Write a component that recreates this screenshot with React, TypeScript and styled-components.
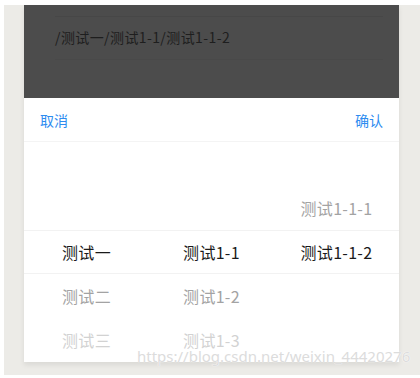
import styled, { createGlobalStyle } from "styled-components";

const GlobalStyle = createGlobalStyle`
  html, body {
    margin: 0;
    padding: 0;
    background: #ffffff;
  }
  body {
    font-family: "Microsoft YaHei", "Noto Sans CJK SC", "Liberation Sans", sans-serif;
  }
`;

const Page = styled.div`
  width: 420px;
  height: 378px;
  padding: 5px 0 0 4px;
  box-sizing: border-box;
  position: relative;
  overflow: hidden;
`;

const Frame = styled.div`
  background: #ecebe7;
  height: 370px;
  padding: 0 0 0 20px;
  box-sizing: border-box;
`;

const Panel = styled.div`
  width: 375px;
  display: flex;
  flex-direction: column;
  box-shadow: 0 3px 5px rgba(0, 0, 0, 0.08);
`;

const Mask = styled.div`
  height: 93px;
  background: #4c4c4c;
  padding: 11px 16px 0 31px;
  box-sizing: border-box;
`;

const PathBox = styled.div`
  height: 44px;
  padding-bottom: 3px;
  border-top: 1px solid #474747;
  border-bottom: 1px solid #494949;
  display: flex;
  align-items: center;
  font-size: 14px;
  letter-spacing: 0.4px;
  color: #1e1e1e;
  box-sizing: border-box;
`;

const Sheet = styled.div`
  background: #ffffff;
`;

const Toolbar = styled.div`
  height: 44px;
  display: flex;
  align-items: center;
  justify-content: space-between;
  padding: 0 16px;
  border-bottom: 1px solid #f4f4f4;
  box-sizing: border-box;
`;

const ToolButton = styled.span`
  font-size: 14px;
  color: #2d8cf0;
`;

const Picker = styled.div`
  position: relative;
  height: 220px;
  display: grid;
  grid-template-columns: repeat(3, 1fr);
  overflow: hidden;
`;

const Highlight = styled.div`
  position: absolute;
  left: 0;
  right: 0;
  top: 88px;
  height: 44px;
  border-top: 1px solid #f2f2f2;
  border-bottom: 1px solid #f2f2f2;
  box-sizing: border-box;
  pointer-events: none;
`;

const Column = styled.div<{ $offset: number }>`
  display: flex;
  flex-direction: column;
  padding-top: ${({ $offset }) => 88 - $offset * 44}px;
`;

const Item = styled.div<{ $distance: number }>`
  height: 44px;
  flex-shrink: 0;
  display: flex;
  align-items: center;
  justify-content: center;
  font-size: 16px;
  letter-spacing: 0.3px;
  color: ${({ $distance }) =>
    $distance === 0 ? "#1a1a1a" : $distance === 1 ? "#a3a3a3" : "#d2d2d2"};
`;

const Watermark = styled.div`
  position: absolute;
  left: 137px;
  top: 346px;
  font-family: "Microsoft YaHei", "Noto Sans", "Liberation Sans", sans-serif;
  font-size: 15px;
  color: #dcdcdc;
  text-shadow: 0 0 1px #ffffff, 0 0 1px #ffffff;
  white-space: nowrap;
`;

const columns = [
  { items: ["测试一", "测试二", "测试三"], selected: 0 },
  { items: ["测试1-1", "测试1-2", "测试1-3"], selected: 0 },
  { items: ["测试1-1-1", "测试1-1-2"], selected: 1 },
];

export default function App() {
  return (
    <>
      <GlobalStyle />
      <Page>
        <Frame>
          <Panel>
            <Mask>
              <PathBox>/测试一/测试1-1/测试1-1-2</PathBox>
            </Mask>
            <Sheet>
              <Toolbar>
                <ToolButton>取消</ToolButton>
                <ToolButton>确认</ToolButton>
              </Toolbar>
              <Picker>
                <Highlight />
                {columns.map((col, ci) => (
                  <Column key={ci} $offset={col.selected}>
                    {col.items.map((text, i) => (
                      <Item key={text} $distance={Math.abs(i - col.selected)}>
                        {text}
                      </Item>
                    ))}
                  </Column>
                ))}
              </Picker>
            </Sheet>
          </Panel>
        </Frame>
        <Watermark>https://blog.csdn.net/weixin_44420276</Watermark>
      </Page>
    </>
  );
}
